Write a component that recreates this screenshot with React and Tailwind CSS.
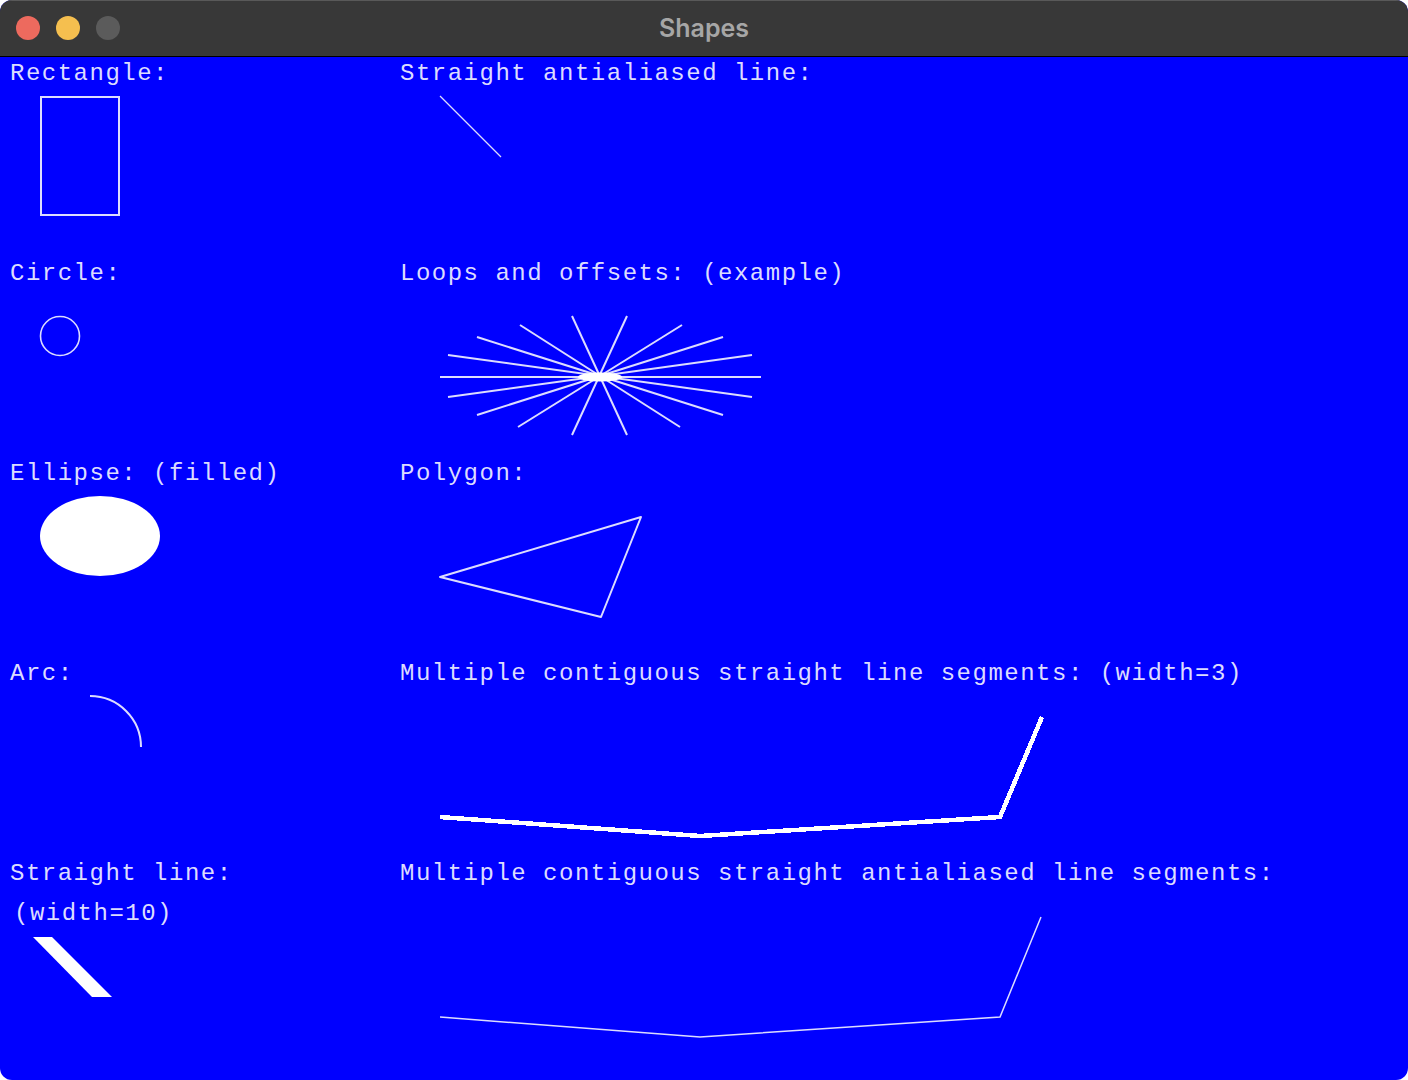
const mono = { fontFamily: '"Liberation Mono", "DejaVu Sans Mono", monospace' };

const Label = ({ children, className = '' }) => (
  <div className={`h-[30px] leading-[33px] text-[24px] tracking-[1.5px] text-[#dcdcff] whitespace-nowrap ${className}`} style={mono}>
    {children}
  </div>
);

// each drawing uses window coordinates through its viewBox
const Canvas = ({ x, y, w, h, children }) => (
  <svg width={w} height={h} viewBox={`${x} ${y} ${w} ${h}`} className="block">
    {children}
  </svg>
);

const rays = [
  [440, 377, 761, 377],
  [448, 355, 752, 397],
  [448, 397, 752, 355],
  [477, 337, 723, 415],
  [477, 415, 723, 337],
  [520, 325, 680, 427],
  [518, 427, 682, 325],
  [572, 316, 627, 435],
  [572, 435, 627, 316],
];

const Cell = ({ label, x, y, w, children, extra }) => (
  <div className="flex flex-col h-[200px] pl-[10px]">
    <Label>{label}</Label>
    {extra}
    <div className="-ml-[10px]">
      <Canvas x={x} y={y} w={w} h={extra ? 120 : 170}>
        {children}
      </Canvas>
    </div>
  </div>
);

export default function App() {
  const L = 390;
  const R = 1018;
  const stroke = '#dcdcff';

  return (
    <div className="w-[1408px] h-[1080px] bg-white">
      <div className="w-full h-full rounded-[12px] overflow-hidden flex flex-col bg-[#0000ff]">
        {/* title bar */}
        <div className="h-[57px] shrink-0 bg-[#383838] border-t border-[#595959] border-b border-b-black relative flex items-center justify-center">
          <div className="absolute left-[16px] top-[15px] flex gap-[16px]">
            <span className="w-[24px] h-[24px] rounded-full bg-[#ed6a5e]" />
            <span className="w-[24px] h-[24px] rounded-full bg-[#f5bf4f]" />
            <span className="w-[24px] h-[24px] rounded-full bg-[#5b5b5b]" />
          </div>
          <span className="text-[25px] leading-[30px] -mt-[2px] font-semibold text-[#a6a6a6]" style={{ fontFamily: 'Inter, "Noto Sans", sans-serif' }}>
            Shapes
          </span>
        </div>

        <div className="grid grid-cols-[390px_1fr]">
          <Cell label="Rectangle:" x={0} y={87} w={L}>
            <rect x={41} y={97} width={78} height={118} fill="none" stroke={stroke} strokeWidth={2} />
          </Cell>
          <Cell label="Straight antialiased line:" x={390} y={87} w={R}>
            <line x1={440} y1={96} x2={501} y2={157} stroke={stroke} strokeWidth={1.3} />
          </Cell>

          <Cell label="Circle:" x={0} y={287} w={L}>
            <circle cx={60} cy={336} r={19.5} fill="none" stroke={stroke} strokeWidth={1.6} />
          </Cell>
          <Cell label="Loops and offsets: (example)" x={390} y={287} w={R}>
            {rays.map(([x1, y1, x2, y2], i) => (
              <line key={i} x1={x1} y1={y1} x2={x2} y2={y2} stroke={stroke} strokeWidth={2} />
            ))}
            <ellipse cx={600} cy={377} rx={22} ry={4.5} fill="#ffffff" />
          </Cell>

          <Cell label="Ellipse: (filled)" x={0} y={487} w={L}>
            <ellipse cx={100} cy={536} rx={60} ry={40} fill="#ffffff" />
          </Cell>
          <Cell label="Polygon:" x={390} y={487} w={R}>
            <polygon points="440,577 641,517 601,617" fill="none" stroke={stroke} strokeWidth={2} strokeLinejoin="round" />
          </Cell>

          <Cell label="Arc:" x={0} y={687} w={L}>
            <path d="M90 696 A51 51 0 0 1 141 747" fill="none" stroke={stroke} strokeWidth={2} />
          </Cell>
          <Cell label="Multiple contiguous straight line segments: (width=3)" x={390} y={687} w={R}>
            <polyline
              points="440,817 700,836 1000,817 1042,717"
              fill="none"
              stroke="#ffffff"
              strokeWidth={4.5}
              shapeRendering="crispEdges"
            />
          </Cell>

          <Cell
            label="Straight line:"
            x={0}
            y={927}
            w={L}
            extra={<Label className="pl-[4px] mt-[10px]">(width=10)</Label>}
          >
            <polygon points="33,937 52,937 112,997 92,997" fill="#ffffff" />
          </Cell>
          <Cell label="Multiple contiguous straight antialiased line segments:" x={390} y={887} w={R}>
            <polyline points="440,1017 700,1037 1000,1017 1041,917" fill="none" stroke={stroke} strokeWidth={1.5} />
          </Cell>
        </div>
      </div>
    </div>
  );
}
